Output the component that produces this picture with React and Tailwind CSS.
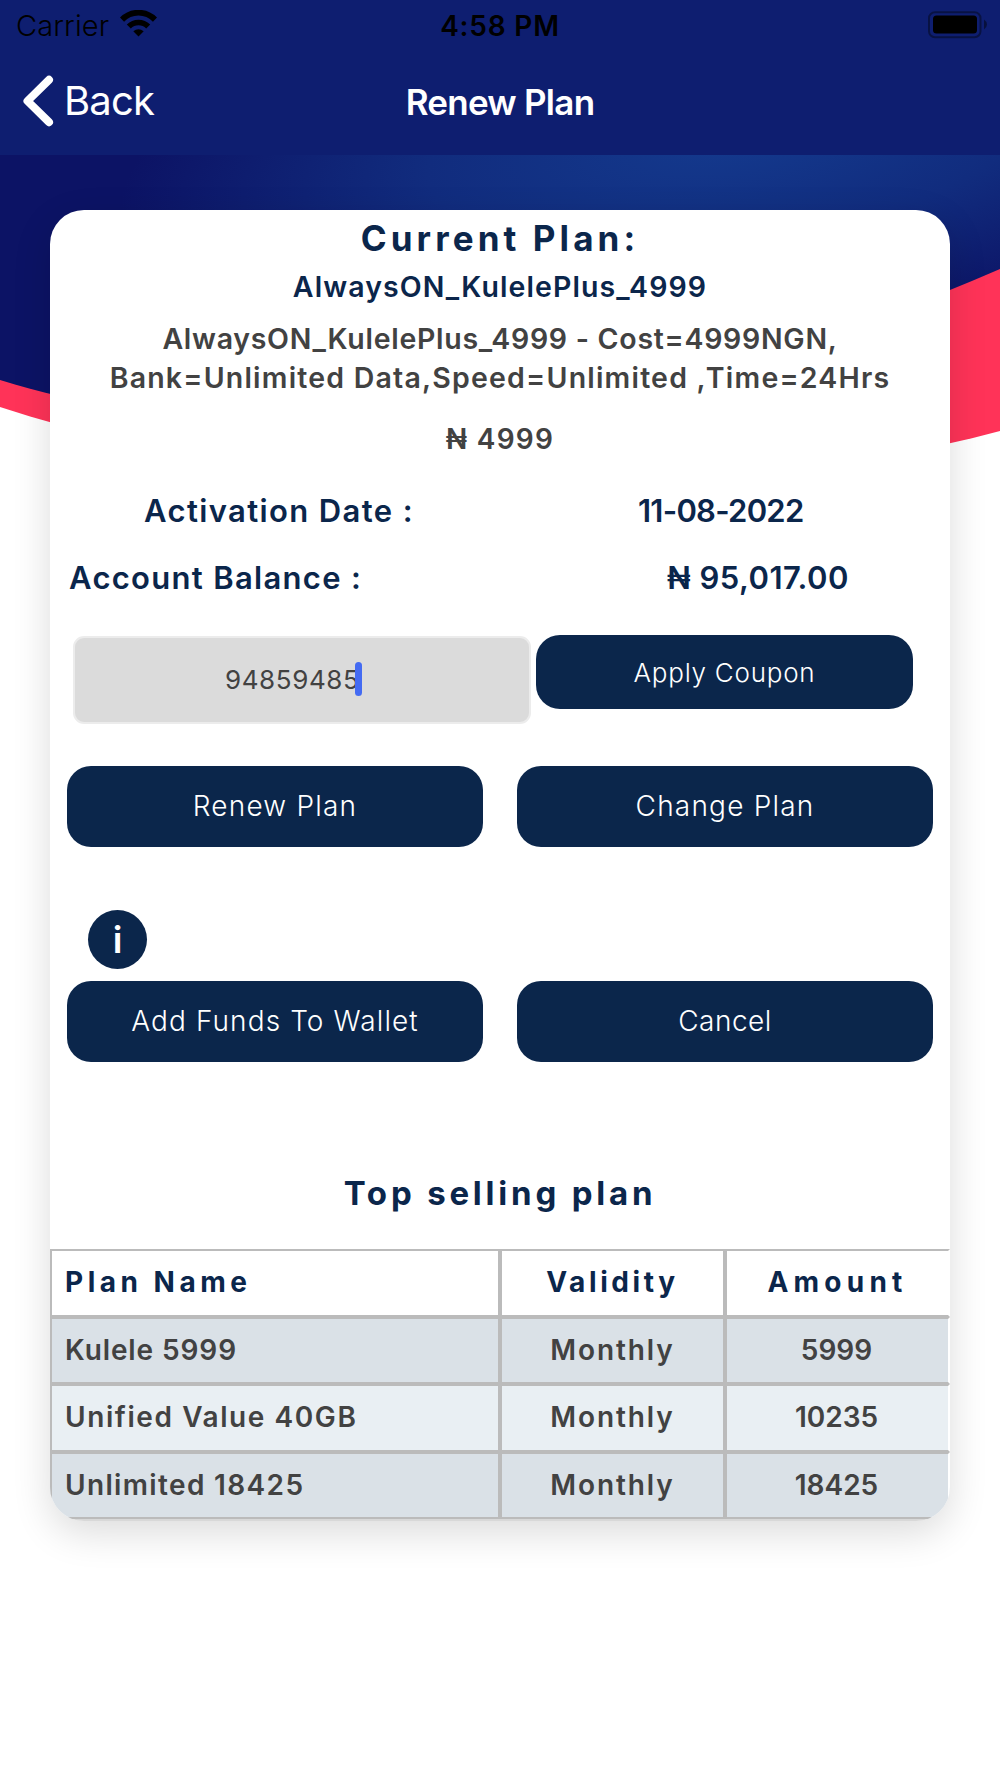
import React from 'react';

const plans = [
  {
    name: 'Kulele 5999',
    nameClass: 'tracking-[0.9px]',
    amount: '5999',
    row: 'bg-[#dae1e7]',
  },
  {
    name: 'Unified Value 40GB',
    nameClass: 'tracking-[1.58px]',
    amount: '10235',
    row: 'bg-[#e9eff3]',
  },
  {
    name: 'Unlimited 18425',
    nameClass: 'tracking-[1.35px]',
    amount: '18425',
    row: 'bg-[#dae1e7]',
  },
];

const WifiIcon = () => (
  <svg className="w-[37px] h-[27px] mb-[3px]" viewBox="0 0 37 27" fill="none" stroke="black">
    <path d="M2 9.6A23.2 23.2 0 0 1 35 9.6" strokeWidth="5.8" />
    <path d="M8.8 16.5A13.7 13.7 0 0 1 28.2 16.5" strokeWidth="5.6" />
    <path d="M13.3 21.2A8.5 8.5 0 0 1 23.7 21.2L18.5 26.6Z" fill="black" stroke="none" />
  </svg>
);

const BatteryIcon = () => (
  <svg className="w-[60px] h-[28px]" viewBox="0 0 60 28" fill="none">
    <rect x="1" y="1.3" width="51.5" height="25" rx="6" stroke="black" strokeOpacity="0.4" strokeWidth="2" />
    <rect x="5" y="4.5" width="44" height="18" rx="3.5" fill="black" />
    <path d="M56 8.5Q59 10.5 59 13.5T56 18.5Z" fill="black" fillOpacity="0.45" />
  </svg>
);

const StatusBar = () => (
  <div className="grid grid-cols-3 items-center h-[50px] px-[12px] text-black">
    <div className="flex items-center gap-[11px] pl-[4px]">
      <span className="text-[29px] font-light leading-none tracking-[0.1px]">Carrier</span>
      <WifiIcon />
    </div>
    <span className="pt-[2px] text-center text-[28px] font-semibold leading-none tracking-[0.8px]">4:58 PM</span>
    <div className="flex justify-end">
      <BatteryIcon />
    </div>
  </div>
);

const NavBar = () => (
  <div className="grid grid-cols-3 items-center h-[105px] px-[20px] text-white">
    <div className="flex items-center gap-[9px] pb-[4px]">
      <svg className="w-[35px] h-[52px]" viewBox="0 0 35 52" fill="none">
        <path d="M29 4.8L7.5 26L29 47.2" stroke="white" strokeWidth="8" strokeLinecap="round" strokeLinejoin="round" />
      </svg>
      <span className="text-[40px] leading-none tracking-[-0.8px]">Back</span>
    </div>
    <span className="text-center text-[35px] font-semibold leading-none tracking-[-0.75px]">Renew Plan</span>
    <span />
  </div>
);

const Backdrop = () => (
  <svg className="absolute left-0 top-0 w-[1000px] h-[540px]" viewBox="0 0 1000 540" fill="none">
    <defs>
      <radialGradient id="glow" gradientUnits="userSpaceOnUse" cx="0" cy="0" r="1" gradientTransform="translate(735 135) rotate(-8) scale(620 215)">
        <stop offset="0" stopColor="#143a8e" />
        <stop offset="0.5" stopColor="#112c7e" />
        <stop offset="1" stopColor="#0c1365" />
      </radialGradient>
    </defs>
    <path d="M0 0H1000V431C700 511 300 505 0 407Z" fill="#ff3358" />
    <path d="M0 0H1000V269C700 401 300 474 0 380Z" fill="url(#glow)" />
  </svg>
);

const ActionButton = ({ children, className = '' }) => (
  <button className={`w-[416px] h-[81px] pb-[2px] rounded-[24px] bg-[#0b264b] text-white text-[28px] font-light ${className}`}>
    {children}
  </button>
);

export default function App() {
  return (
    <div className="relative w-[1000px] h-[1778px] overflow-hidden bg-white font-[Inter,sans-serif]">
      <Backdrop />

      <header className="relative h-[155px] bg-[#0e1e70]">
        <StatusBar />
        <NavBar />
      </header>

      <main className="relative mt-[55px] mx-[50px] h-[1311px] rounded-[34px] overflow-hidden bg-white text-[#0b264b] shadow-[0_12px_38px_rgba(0,0,0,0.14)]">
        {/* Current plan */}
        <h1 className="text-center text-[35px] leading-[56px] font-bold tracking-[4.1px]">Current Plan:</h1>
        <h2 className="text-center text-[28.5px] leading-[42px] font-semibold tracking-[1.09px]">AlwaysON_KulelePlus_4999</h2>
        <p className="mt-[11px] text-center text-[28.5px] leading-[39px] font-semibold text-[#424242]">
          <span className="block tracking-[0.72px]">AlwaysON_KulelePlus_4999 - Cost=4999NGN,</span>
          <span className="block tracking-[1.2px]">Bank=Unlimited Data,Speed=Unlimited ,Time=24Hrs</span>
        </p>
        <p className="mt-[21px] text-center text-[28px] leading-[42px] font-semibold tracking-[1.3px] text-[#424242]">₦ 4999</p>

        {/* Account details */}
        <div className="mt-[17px] grid grid-cols-2 text-[31px] font-semibold">
          <span className="leading-[67px] pl-[94px] tracking-[1.38px]">Activation Date :</span>
          <span className="leading-[67px] pl-[138px] whitespace-nowrap tracking-[-0.75px]">11-08-2022</span>
          <span className="leading-[68px] pl-[19px] tracking-[1.3px]">Account Balance :</span>
          <span className="leading-[68px] pl-[167px] whitespace-nowrap tracking-[0.5px]">₦ 95,017.00</span>
        </div>

        {/* Coupon */}
        <div className="mt-[23px] flex items-start gap-[5px] pl-[23px]">
          <div className="mt-px flex items-center w-[458px] h-[88px] rounded-[11px] border-2 border-[#ececec] bg-[#dbdbdb] pl-[150px] pb-px">
            <span className="text-[26px] font-normal tracking-[0.6px] text-[#424242]">94859485</span>
            <span className="relative -left-[4px] bottom-px w-[7px] h-[34px] rounded-full bg-[#446bf2]" />
          </div>
          <button className="w-[377px] h-[74px] rounded-[24px] bg-[#0b264b] text-white text-[26px] font-light tracking-[0.75px]">
            Apply Coupon
          </button>
        </div>

        {/* Actions */}
        <div className="mt-[42px] flex gap-[34px] px-[17px]">
          <ActionButton className="tracking-[1.2px]">Renew Plan</ActionButton>
          <ActionButton className="tracking-[1.2px]">Change Plan</ActionButton>
        </div>
        <div className="mt-[63px] ml-[38px] flex items-center justify-center size-[59px] rounded-full bg-[#0b264b] text-white text-[37px] leading-none font-semibold">
          i
        </div>
        <div className="mt-[12px] flex gap-[34px] px-[17px]">
          <ActionButton className="tracking-[1.1px]">Add Funds To Wallet</ActionButton>
          <ActionButton className="tracking-[0.5px]">Cancel</ActionButton>
        </div>

        {/* Top selling plans */}
        <h3 className="mt-[101px] text-center text-[33px] leading-[60px] font-bold tracking-[3.8px]">Top selling plan</h3>
        <div className="mt-[26px] text-[28px] border-b-3 border-[#d8d8d8]">
          <div className="grid grid-cols-[450px_225px_225px] h-[67.5px] font-bold leading-[63px]">
            <span className="border-2 border-[#bbbbbb] pl-[13px] tracking-[4.5px]">Plan Name</span>
            <span className="border-2 border-[#bbbbbb] text-center tracking-[3.6px]">Validity</span>
            <span className="border-2 border-[#bbbbbb] border-r-white text-center tracking-[5.2px]">Amount</span>
          </div>
          {plans.map((plan) => (
            <div
              key={plan.name}
              className={`grid grid-cols-[450px_225px_225px] h-[67.5px] font-semibold leading-[63.5px] text-[#424242] ${plan.row}`}
            >
              <span className={`border-2 border-[#bbbbbb] pl-[13px] ${plan.nameClass}`}>{plan.name}</span>
              <span className="border-2 border-[#bbbbbb] text-center tracking-[1.9px]">Monthly</span>
              <span className="border-2 border-[#bbbbbb] border-r-white text-center pr-[2px]">{plan.amount}</span>
            </div>
          ))}
        </div>
      </main>
    </div>
  );
}
